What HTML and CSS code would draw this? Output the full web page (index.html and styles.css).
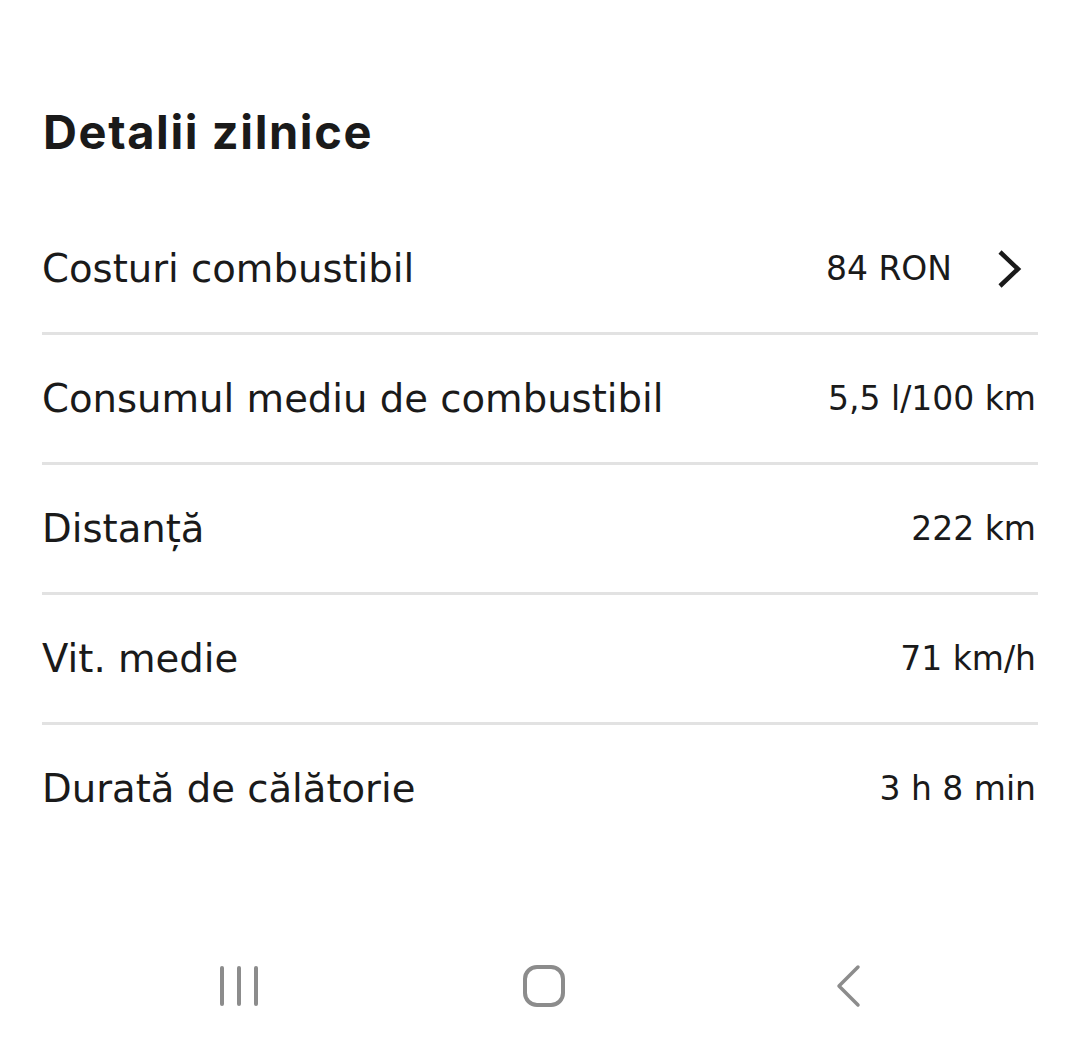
FILE: index.html
```html
<!DOCTYPE html>
<html>
<head>
  <title>Detalii zilnice</title>
  <link rel="stylesheet" href="styles.css">
</head>
<body>
  <div class="screen">
    <h1 class="title">Detalii zilnice</h1>
    <ul class="details">
      <li class="row">
        <span class="label">Costuri combustibil</span>
        <span class="value">84 RON
          <svg class="chevron" width="26" height="40" viewBox="0 0 26 40"><path d="M4 3 L22 20 L4 37" fill="none" stroke="#1a1a1a" stroke-width="4.5"/></svg>
        </span>
      </li>
      <li class="row">
        <span class="label">Consumul mediu de combustibil</span>
        <span class="value">5,5 l/100 km</span>
      </li>
      <li class="row">
        <span class="label">Distanță</span>
        <span class="value">222 km</span>
      </li>
      <li class="row">
        <span class="label">Vit. medie</span>
        <span class="value">71 km/h</span>
      </li>
      <li class="row">
        <span class="label">Durată de călătorie</span>
        <span class="value">3 h 8 min</span>
      </li>
    </ul>
    <div class="navbar">
      <svg width="46" height="42" viewBox="0 0 46 42"><g stroke="#8c8c8c" stroke-width="4" stroke-linecap="round"><path d="M5 3 V39"/><path d="M22 3 V39"/><path d="M39 3 V39"/></g></svg>
      <svg width="46" height="46" viewBox="0 0 46 46"><rect x="4" y="4" width="38" height="38" rx="12" fill="none" stroke="#8c8c8c" stroke-width="4"/></svg>
      <svg width="46" height="44" viewBox="0 0 46 44"><path d="M33 3 L14 22 L33 41" fill="none" stroke="#8c8c8c" stroke-width="3.5" stroke-linecap="round" stroke-linejoin="round"/></svg>
    </div>
  </div>
</body>
</html>
```
FILE: styles.css
```css
body { margin: 0; background: #fff; font-family: "DejaVu Sans", sans-serif; color: #1a1a1a; }
.screen { width: 1080px; height: 1048px; display: flex; flex-direction: column; }
.title { margin: 0; padding: 102px 0 0 43px; font-family: Inter, sans-serif; font-size: 47px; font-weight: 700; height: 103px; line-height: 60px; box-sizing: content-box; letter-spacing: 1.6px; }
.details { list-style: none; margin: 0; padding: 0 42px; }
.row { display: flex; justify-content: space-between; align-items: center; height: 127px; }
.row + .row { border-top: 3px solid #e2e2e2; }
.label { font-size: 38.6px; }
.value { display: flex; align-items: center; gap: 44px; padding-right: 2px; font-size: 33px; }
.chevron { margin-right: 14px; }
.navbar { margin-top: auto; height: 124px; display: flex; align-items: center; gap: 258px; padding-left: 217px; }
```
